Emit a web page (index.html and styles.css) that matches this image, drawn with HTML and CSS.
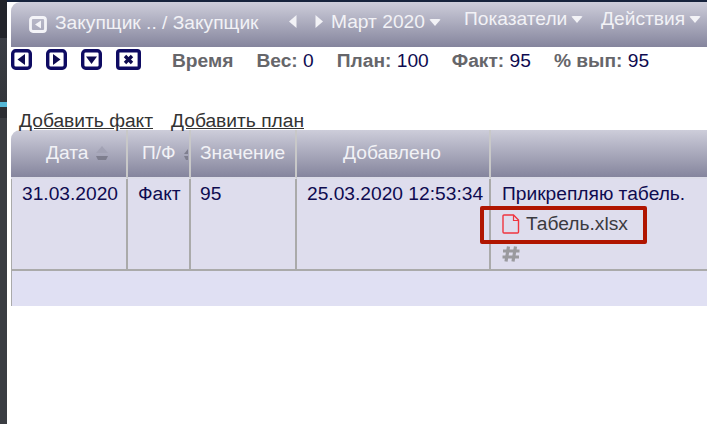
FILE: index.html
```html
<!DOCTYPE html>
<html lang="ru">
<head>
<meta charset="utf-8">
<title>Закупщик</title>
<link rel="stylesheet" href="styles.css">
</head>
<body>
<aside class="rail">
  <div class="rail-top"></div>
  <div class="rail-mid"></div>
  <div class="rail-mark"></div>
  <div class="rail-low"></div>
  <div class="rail-end"></div>
</aside>
<main class="page">
  <header class="topbar">
    <svg class="back" width="18" height="17" viewBox="0 0 18 17"><rect x="1.500" y="1.500" width="15" height="14" rx="2.500" fill="#c4c4d2" fill-opacity=".35" stroke="#f4f4f8" stroke-width="2.800"/><path d="M12 4.500v8L6 8.500z" fill="#f4f4f8"/></svg>
    <span class="crumb">Закупщик .. / Закупщик</span>
    <svg class="arrow arrow-l" width="8" height="13" viewBox="0 0 8 13"><path d="M7.500 0v13L0 6.500z" fill="#f2f2f6"/></svg>
    <svg class="arrow arrow-r" width="8" height="13" viewBox="0 0 8 13"><path d="M.5 0v13L8 6.500z" fill="#f2f2f6"/></svg>
    <span class="month">Март 2020<i class="caret"></i></span>
    <span class="menu menu-a">Показатели<i class="caret"></i></span>
    <span class="menu menu-b">Действия<i class="caret"></i></span>
  </header>

  <div class="toolbar">
    <div class="tools">
      <svg class="tool" width="21" height="21" viewBox="0 0 21 21"><rect x="1.700" y="1.700" width="17.600" height="17.600" rx="3" fill="#fff" stroke="#0e0b62" stroke-width="3.400"/><path d="M14 5v11L6.500 10.500z" fill="#0e0b50"/></svg>
      <svg class="tool" width="21" height="21" viewBox="0 0 21 21"><rect x="1.700" y="1.700" width="17.600" height="17.600" rx="3" fill="#fff" stroke="#0e0b62" stroke-width="3.400"/><path d="M7 5v11l7.500-5.500z" fill="#0e0b50"/></svg>
      <svg class="tool" width="21" height="21" viewBox="0 0 21 21"><rect x="1.700" y="1.700" width="17.600" height="17.600" rx="3" fill="#fff" stroke="#0e0b62" stroke-width="3.400"/><path d="M5 7.500h11l-5.500 7.500z" fill="#0e0b50"/></svg>
      <svg class="tool" width="25" height="21" viewBox="0 0 25 21"><rect x="1.700" y="1.700" width="21.600" height="17.600" rx="2" fill="#fff" stroke="#0e0b62" stroke-width="3.400"/><path d="M9 7l7 7M16 7l-7 7" stroke="#0e0b50" stroke-width="3.400" fill="none"/></svg>
    </div>
    <div class="stats">
      <b class="stat-time">Время</b>
      <span class="stat"><b>Вес:</b> 0</span>
      <span class="stat"><b>План:</b> 100</span>
      <span class="stat"><b>Факт:</b> 95</span>
      <span class="stat"><b>% вып:</b> 95</span>
    </div>
  </div>

  <nav class="links">
    <a href="#">Добавить факт</a>
    <a href="#">Добавить план</a>
  </nav>

  <table class="grid">
    <colgroup>
      <col class="c1"><col class="c2"><col class="c3"><col class="c4"><col>
    </colgroup>
    <thead>
      <tr>
        <th class="first">Дата<svg class="sort" width="14" height="20" viewBox="0 0 14 20"><path d="M7 2l6 7H1z" fill="#a2a2b4"/><path d="M1 12h12l-2 4H3z" fill="#7e7e8e"/></svg></th>
        <th class="h2">П/Ф<svg class="sort sort-s" width="5" height="20" viewBox="0 0 5 20"><path d="M5 5v5H1z" fill="#7e7e8e"/><path d="M1 12h4v4H3z" fill="#7e7e8e"/></svg></th>
        <th class="h3">Значение</th>
        <th class="h4">Добавлено</th>
        <th class="last"></th>
      </tr>
    </thead>
    <tbody>
      <tr class="row">
        <td class="d1">31.03.2020</td>
        <td class="d2">Факт</td>
        <td class="d3">95</td>
        <td class="d4">25.03.2020 12:53:34</td>
        <td class="d5">
          <div class="note">Прикрепляю табель.</div>
          <div class="file">
            <svg width="18" height="20" viewBox="0 0 18 20"><path d="M2 1h9.500l5 5v12a1 1 0 0 1-1 1H2a1 1 0 0 1-1-1V2a1 1 0 0 1 1-1z" fill="none" stroke="#f0353f" stroke-width="1.400"/><path d="M11.500 1v5.500h5" fill="none" stroke="#f0353f" stroke-width="1.200"/></svg>
            <span>Табель.xlsx</span>
          </div>
          <svg class="hash" width="18" height="18" viewBox="0 0 18 18"><path d="M6.500 1.500L4 16.500M13.500 1.500L11 16.500M1 6h16.500M.5 12h16.500" fill="none" stroke="#9a9a9e" stroke-width="3.200"/></svg>
        </td>
      </tr>
      <tr class="foot"><td colspan="5"></td></tr>
    </tbody>
  </table>
</main>
</body>
</html>
```

FILE: styles.css
```css
* { box-sizing: border-box; }
html, body { margin: 0; height: 100%; overflow: hidden; }
body {
  display: flex;
  background: #fff;
  font-family: "Liberation Sans", Arial, sans-serif;
  font-size: 19.2px;
  color: #0e0b50;
}

.rail { width: 7px; height: 424px; display: flex; flex-direction: column; flex: none; }
.rail-top { height: 38px; background: #22242a; }
.rail-mid { height: 64px; background: linear-gradient(#3a3d44, #33363b); }
.rail-mark { height: 5px; background: #55b7d6; }
.rail-low { height: 11px; background: #2c2e33; }
.rail-end { flex: 1; background: #3a3d42; }

.page { flex: 1; min-width: 0; padding-left: 4px; position: relative; }
.page::before {
  content: "";
  position: absolute;
  left: 0; right: 0; top: 0;
  height: 2px;
  background: #16233c;
}

.topbar {
  margin-top: 2px;
  height: 45px;
  position: relative;
  border-top-left-radius: 9px;
  background: linear-gradient(#cdcdda, #85859d);
  color: #f2f2f6;
  white-space: nowrap;
}
.topbar > * { position: absolute; }
.back { left: 18px; top: 14px; }
.crumb { left: 44px; top: 10px; }
.arrow-l { left: 278px; top: 13px; }
.arrow-r { left: 304px; top: 13px; }
.month { left: 320px; top: 9px; }
.menu-a { left: 453px; top: 6px; }
.menu-b { left: 590px; top: 6px; }
.caret {
  display: inline-block;
  margin-left: 4px;
  vertical-align: 2px;
  border-left: 6.500px solid transparent;
  border-right: 6.500px solid transparent;
  border-top: 7px solid #f2f2f6;
  border-radius: 2px;
}

.toolbar { display: flex; align-items: flex-start; height: 48px; padding-top: 2px; }
.tools { width: 161px; display: flex; gap: 14px; }
.stats { display: flex; gap: 23px; line-height: 24px; white-space: nowrap; }
.stats b { color: #66666a; }

.links { height: 35px; padding: 14px 0 0 8px; display: flex; gap: 18px; line-height: 24px; }
.links a { color: #333; }

.grid {
  width: 696px;
  table-layout: fixed;
  border-collapse: separate;
  border-spacing: 0;
  font-size: 19.2px;
}
.c1 { width: 117px; }
.c2 { width: 63px; }
.c3 { width: 106px; }
.c4 { width: 194px; }

th {
  height: 49px;
  padding: 0 0 1px;
  font-weight: normal;
  color: #f2f2f6;
  background: linear-gradient(#cdcdda, #85859d);
  background-clip: padding-box;
  border-right: 2px solid #c8c8c8;
  border-bottom: 2px solid #dcdce8;
  white-space: nowrap;
  text-align: center;
  vertical-align: middle;
}
th.first { border-top-left-radius: 9px; text-align: left; padding-left: 35px; }
th.h2 { text-align: left; padding-left: 14px; }
th.h3 { text-align: left; padding-left: 9px; }
th.h4 { padding-right: 2px; }
th.last { border-right: 0; }
.sort { vertical-align: -5px; margin-left: 6px; }
.sort-s { margin-left: 7px; }

td { padding: 0; vertical-align: top; background: #dedded; color: #0e0b50; }
.row td {
  height: 92px;
  border-right: 2px solid #aaa;
  border-bottom: 2px solid #aaa;
  padding-top: 4px;
  line-height: 22px;
}
.row .d1 { border-left: 1px solid #aaa; padding-left: 10px; }
.row .d2 { padding-left: 10px; }
.row .d3 { padding-left: 9px; }
.row .d4 { padding-left: 10px; }
.row .d5 { border-right: 0; padding-left: 11px; position: relative; }

.file { display: flex; align-items: center; gap: 6px; height: 22px; margin-top: 8px; color: #3a3a40; }
.file::after {
  content: "";
  box-sizing: border-box;
  position: absolute;
  left: -11px; top: 27px;
  width: 167px;
  height: 38px;
  border: 4px solid #b01500;
  border-radius: 2px;
}
.hash { display: block; margin-top: 10px; }
.foot td { height: 35px; background: #e0e0f3; border-left: 1px solid #aaa; }
```
